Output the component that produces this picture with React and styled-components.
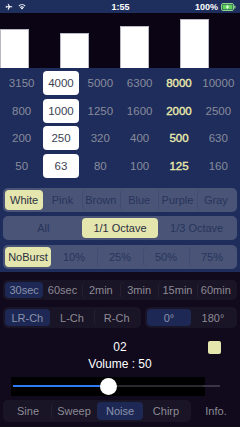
import React from 'react';
import styled, { createGlobalStyle, css } from 'styled-components';

const GlobalStyle = createGlobalStyle`
  html, body {
    margin: 0;
    padding: 0;
    background: #100a1c;
  }
  body {
    font-family: "Liberation Sans", Arial, sans-serif;
    -webkit-font-smoothing: antialiased;
  }
  * {
    box-sizing: border-box;
  }
`;

// Data
const bands = [
  ['3150', '4000', '5000', '6300', '8000', '10000'],
  ['800', '1000', '1250', '1600', '2000', '2500'],
  ['200', '250', '320', '400', '500', '630'],
  ['50', '63', '80', '100', '125', '160'],
];
const barHeights = [39, 35, 42, 49];
const colours = ['White', 'Pink', 'Brown', 'Blue', 'Purple', 'Gray'];
const octaves = ['All', '1/1 Octave', '1/3 Octave'];
const bursts = ['NoBurst', '10%', '25%', '50%', '75%'];
const times = ['30sec', '60sec', '2min', '3min', '15min', '60min'];
const channels = ['LR-Ch', 'L-Ch', 'R-Ch'];
const phases = ['0°', '180°'];
const modes = ['Sine', 'Sweep', 'Noise', 'Chirp'];

// Styled Components
const Screen = styled.div`
  width: 240px;
  height: 427px;
  display: flex;
  flex-direction: column;
  overflow: hidden;
  background: #100a1c;
`;

const StatusBar = styled.div`
  height: 13px;
  padding: 0 4px 0 5px;
  display: grid;
  grid-template-columns: 1fr auto 1fr;
  align-items: center;
  background: #1e2f5e;
  color: #fff;
  font-size: 9px;
  font-weight: 700;
`;

const StatusLeft = styled.div`
  display: flex;
  align-items: center;
  gap: 5px;
`;

const StatusRight = styled.div`
  display: flex;
  align-items: center;
  justify-content: flex-end;
  gap: 3px;
`;

const Chart = styled.div`
  height: 55px;
  display: grid;
  grid-template-columns: repeat(4, 60px);
  align-items: end;
  background: #0a0414;
`;

const Bar = styled.div`
  width: 29px;
  background: #fff;
  border: 1px solid #b9b9c4;
  border-bottom: none;
`;

const BluePanel = styled.div`
  padding: 3px 3px 3.5px;
  display: flex;
  flex-direction: column;
  background: #1f2d5d;
`;

const BandGrid = styled.div`
  margin: 0 -1px;
  display: grid;
  grid-template-columns: repeat(6, 1fr);
  grid-auto-rows: 24px;
  row-gap: 3.5px;
`;

const Band = styled.div`
  justify-self: center;
  width: 36px;
  display: flex;
  align-items: center;
  justify-content: center;
  font-size: 11.5px;
  color: ${({ $highlight }) => ($highlight ? '#ececac' : '#878c9a')};
  -webkit-text-stroke: ${({ $highlight }) => ($highlight ? '0.35px #ececac' : '0')};
  border-radius: 4px;

  ${({ $active }) =>
    $active &&
    css`
      background: #fff;
      color: #3a3f52;
    `}
`;

const SegmentStack = styled.div`
  margin-top: 10.5px;
  display: flex;
  flex-direction: column;
  gap: 4.25px;
`;

const Segmented = styled.div`
  height: ${({ $h }) => $h || 24}px;
  width: ${({ $w }) => ($w ? `${$w}px` : 'auto')};
  padding: 2px;
  display: grid;
  grid-template-columns: repeat(${({ $count }) => $count}, 1fr);
  border-radius: 5px;
  background: ${({ $dark }) => ($dark ? '#191426' : '#4a5477')};
`;

const Segment = styled.div`
  display: flex;
  align-items: center;
  justify-content: center;
  font-size: 11px;
  white-space: nowrap;
  border-radius: 4px;
  color: ${({ $dark }) => ($dark ? '#8d8b95' : '#27345b')};
  box-shadow: ${({ $divider, $dark }) =>
    $divider ? `inset 1px 0 0 ${$dark ? 'rgba(255,255,255,0.05)' : 'rgba(31,45,93,0.18)'}` : 'none'};

  ${({ $active, $dark }) =>
    $active &&
    css`
      background: ${$dark ? '#1d2854' : '#e4e6ae'};
      color: ${$dark ? '#8b93ad' : '#2a2f40'};
      box-shadow: none;
    `}
`;

const DarkPanel = styled.div`
  flex: 1;
  padding: 8px 3px 0;
  display: flex;
  flex-direction: column;
`;

const ChannelRow = styled.div`
  margin-top: 7px;
  display: flex;
  justify-content: space-between;
`;

const CounterRow = styled.div`
  margin-top: 12px;
  height: 13px;
  display: grid;
  grid-template-columns: 1fr auto 1fr;
  align-items: center;
  color: #fff;
  font-size: 12px;
`;

const Marker = styled.div`
  justify-self: end;
  margin-right: 16px;
  width: 13px;
  height: 13px;
  border-radius: 2px;
  background: #e4e6ae;
`;

const VolumeLabel = styled.div`
  margin-top: 4px;
  height: 14px;
  line-height: 14px;
  text-align: center;
  color: #fff;
  font-size: 12px;
`;

const SliderWrap = styled.div`
  position: relative;
  margin: 6px 0 0 8px;
  height: 19px;
`;

const SliderBox = styled.div`
  width: 194px;
  height: 19px;
  background: #000;
`;

const Track = styled.div`
  position: absolute;
  left: 2px;
  top: 8px;
  width: 207px;
  height: 2px;
  background: linear-gradient(to right, #2a2a2e 0 190px, #3a3444 190px);
`;

const Fill = styled.div`
  position: absolute;
  left: 2px;
  top: 8px;
  height: 2px;
  background: #2f7bf5;
`;

const Thumb = styled.div`
  position: absolute;
  top: 1px;
  width: 17px;
  height: 17px;
  margin-left: -8.5px;
  border-radius: 50%;
  background: #fff;
  box-shadow: 0 1px 2px rgba(0, 0, 0, 0.4);
`;

const TabRow = styled.div`
  margin-top: 4px;
  display: flex;
  align-items: center;
`;

const InfoButton = styled.div`
  flex: 1;
  text-align: center;
  padding-left: 4px;
  font-size: 11px;
  color: #8d8b95;
`;

const Airplane = () => (
  <svg width="8" height="8" viewBox="0 0 24 24" fill="#fff">
    <path d="M21 16v-2l-8-5V3.5a1.5 1.5 0 0 0-3 0V9l-8 5v2l8-2.5V19l-2 1.5V22l3.5-1 3.5 1v-1.5L13 19v-5.5z" transform="rotate(90 12 12)" />
  </svg>
);

const Wifi = () => (
  <svg width="8" height="7" viewBox="0 0 16 12" fill="#fff">
    <path d="M8 12L5.6 9.4a3.4 3.4 0 0 1 4.8 0z" />
    <path d="M3.8 7.5a6 6 0 0 1 8.4 0L11 8.8a4.2 4.2 0 0 0-6 0z" />
    <path d="M1 4.6a10 10 0 0 1 14 0l-1.3 1.3a8.2 8.2 0 0 0-11.4 0z" />
  </svg>
);

const Battery = () => (
  <svg width="15" height="8" viewBox="0 0 15 8">
    <rect x="0.5" y="0.5" width="12" height="7" rx="1.5" fill="none" stroke="#8fd38a" />
    <rect x="1.5" y="1.5" width="10" height="5" rx="0.8" fill="#5fd35a" />
    <rect x="13.2" y="2.5" width="1.3" height="3" rx="0.5" fill="#8fd38a" />
    <path d="M7.2 1.2L4.6 4.4h1.8L5.6 6.8l2.8-3.3H6.6z" fill="#fff" />
  </svg>
);

const SegmentGroup = ({ items, active, dark, h, w }) => (
  <Segmented $count={items.length} $dark={dark} $h={h} $w={w}>
    {items.map((item, i) => (
      <Segment
        key={item}
        $dark={dark}
        $active={i === active}
        $divider={i > 0 && i !== active && i - 1 !== active}
      >
        {item}
      </Segment>
    ))}
  </Segmented>
);

const App = () => {
  const volume = 50;

  return (
    <>
      <GlobalStyle />
      <Screen>
        <StatusBar>
          <StatusLeft>
            <Airplane />
            <Wifi />
          </StatusLeft>
          <span>1:55</span>
          <StatusRight>
            <span>100%</span>
            <Battery />
          </StatusRight>
        </StatusBar>

        <Chart>
          {barHeights.map((h, i) => (
            <Bar key={i} style={{ height: h }} />
          ))}
        </Chart>

        <BluePanel>
          <BandGrid>
            {bands.map((row) =>
              row.map((value, col) => (
                <Band key={value} $active={col === 1} $highlight={col === 4}>
                  {value}
                </Band>
              ))
            )}
          </BandGrid>
          <SegmentStack>
            <SegmentGroup items={colours} active={0} />
            <SegmentGroup items={octaves} active={1} />
            <SegmentGroup items={bursts} active={0} />
          </SegmentStack>
        </BluePanel>

        <DarkPanel>
          <SegmentGroup items={times} active={0} dark h={20} />
          <ChannelRow>
            <SegmentGroup items={channels} active={0} dark h={21} w={138} />
            <SegmentGroup items={phases} active={0} dark h={21} w={92} />
          </ChannelRow>
          <CounterRow>
            <span />
            <span>02</span>
            <Marker />
          </CounterRow>
          <VolumeLabel>Volume : {volume}</VolumeLabel>
          <SliderWrap>
            <SliderBox />
            <Track />
            <Fill style={{ width: (volume / 100) * 190 }} />
            <Thumb style={{ left: 2 + (volume / 100) * 190 }} />
          </SliderWrap>
          <TabRow>
            <SegmentGroup items={modes} active={2} dark h={22} w={188} />
            <InfoButton>Info.</InfoButton>
          </TabRow>
        </DarkPanel>
      </Screen>
    </>
  );
};

export default App;
